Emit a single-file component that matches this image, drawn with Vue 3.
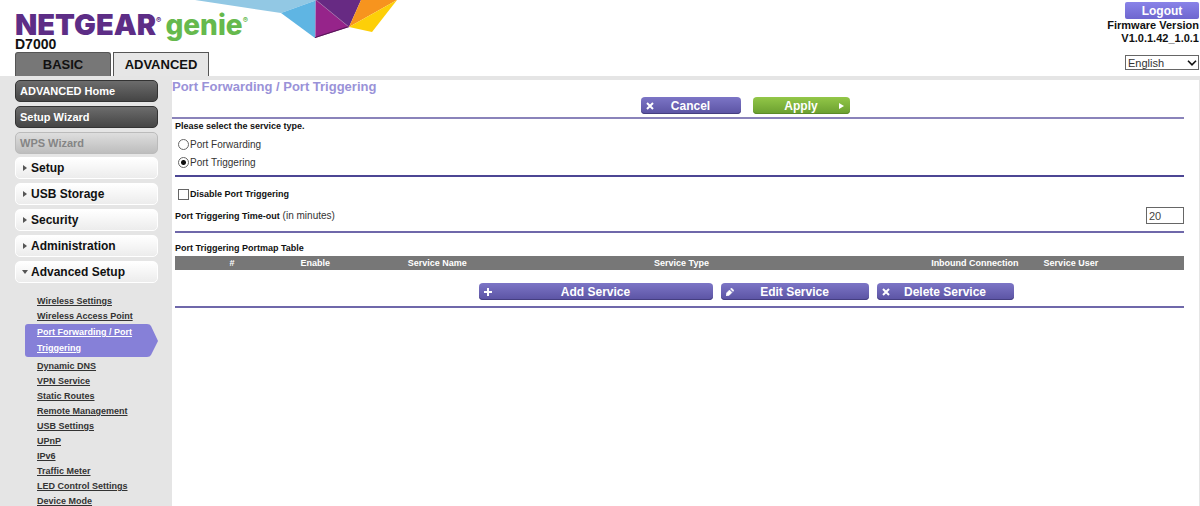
<script setup>
import { ref } from 'vue'

const menu = [
  { label: 'Setup' },
  { label: 'USB Storage' },
  { label: 'Security' },
  { label: 'Administration' },
  { label: 'Advanced Setup', open: true },
]

const links = [
  { label: 'Wireless Settings' },
  { label: 'Wireless Access Point' },
  { label: 'Port Forwarding / Port Triggering', current: true },
  { label: 'Dynamic DNS' },
  { label: 'VPN Service' },
  { label: 'Static Routes' },
  { label: 'Remote Management' },
  { label: 'USB Settings' },
  { label: 'UPnP' },
  { label: 'IPv6' },
  { label: 'Traffic Meter' },
  { label: 'LED Control Settings' },
  { label: 'Device Mode' },
]

const language = ref('English')
const service = ref('triggering')
const disabled = ref(false)
const timeout = ref('20')
</script>

<template>
  <div class="page">
    <header class="header">
      <svg class="crystals" width="210" height="40" viewBox="190 0 210 40" aria-hidden="true">
        <polygon points="195,0 317,0 281,13" fill="#92c8e4" />
        <polygon points="317,0 281,13 315,38" fill="#5fb5e3" />
        <polygon points="316,0 315,38 349,27" fill="#96248a" />
        <polygon points="316,0 361,0 349,27" fill="#672a83" />
        <polygon points="361,0 397,0 349,27" fill="#f7941e" />
        <polygon points="397,0 372,32 349,27" fill="#fdcf08" />
        <path d="M315 37.500L349 26.500" stroke="#561658" stroke-width="1.200" />
        <path d="M316 0L349 27" stroke="#a779ac" stroke-width=".6" />
        <path d="M315.500 0V37" stroke="#b286c4" stroke-width=".7" />
      </svg>
      <div class="left">
        <div class="brand">
          <span class="netgear">NETGEAR<sup>®</sup></span>
          <span class="genie">genie<sup>®</sup></span>
        </div>
        <div class="model">D7000</div>
        <nav class="tabs">
          <button type="button" class="tab basic">BASIC</button>
          <button type="button" class="tab advanced">ADVANCED</button>
        </nav>
      </div>
      <div class="right">
        <button type="button" class="logout">Logout</button>
        <div class="firmware">Firmware Version<br />V1.0.1.42_1.0.1</div>
        <div class="language">
          <select v-model="language" aria-label="Language">
            <option>English</option>
          </select>
          <svg width="10" height="6" viewBox="0 0 10 6" aria-hidden="true">
            <path d="M1 .8L5 4.800L9 .8" fill="none" stroke="#111" stroke-width="1.600" />
          </svg>
        </div>
      </div>
    </header>

    <div class="body">
      <aside class="sidebar">
        <div class="group wizards">
          <button type="button" class="item dark">ADVANCED Home</button>
          <button type="button" class="item dark">Setup Wizard</button>
          <button type="button" class="item off" disabled>WPS Wizard</button>
        </div>
        <div class="group">
          <button v-for="m in menu" :key="m.label" type="button" class="item light" :aria-expanded="!!m.open">
            <svg width="6" height="6" viewBox="0 0 6 6" aria-hidden="true">
              <path :d="m.open ? 'M0 1H6L3 5z' : 'M1 0V6L5 3z'" fill="#555" />
            </svg>
            {{ m.label }}
          </button>
        </div>
        <ul class="links">
          <li v-for="l in links" :key="l.label" :class="{ current: l.current }">
            <svg v-if="l.current" class="flag" viewBox="0 0 133 33" preserveAspectRatio="none" aria-hidden="true">
              <path d="M3 0H122Q125 0 126 2L133 17L126 31Q125 33 122 33H3Q0 33 0 30V3Q0 0 3 0z" fill="#8680d8" />
            </svg>
            <a href="#">{{ l.label }}</a>
          </li>
        </ul>
      </aside>

      <main class="main">
        <h1>Port Forwarding / Port Triggering</h1>
        <div class="actions top">
          <button type="button" class="btn cancel">
            <svg width="8" height="8" viewBox="0 0 8 8" aria-hidden="true"><path d="M1 1L7 7M7 1L1 7" stroke="#fff" stroke-width="2" /></svg>
            <span>Cancel</span>
          </button>
          <button type="button" class="btn apply">
            <span>Apply</span>
            <svg width="6" height="6" viewBox="0 0 6 6" aria-hidden="true"><path d="M1 0V6L6 3z" fill="#fff" /></svg>
          </button>
        </div>

        <div class="content">
          <fieldset class="section service">
            <legend>Please select the service type.</legend>
            <label><input v-model="service" type="radio" name="service" value="forwarding" />Port Forwarding</label>
            <label><input v-model="service" type="radio" name="service" value="triggering" />Port Triggering</label>
          </fieldset>

          <section class="section options">
            <label class="strong"><input v-model="disabled" type="checkbox" />Disable Port Triggering</label>
            <div class="timeout">
              <label for="timeout"><b>Port Triggering Time-out</b> (in minutes)</label>
              <input id="timeout" v-model="timeout" type="text" />
            </div>
          </section>

          <section class="section last">
            <table>
              <caption>Port Triggering Portmap Table</caption>
              <thead>
                <tr>
                  <th class="num">#</th>
                  <th class="enable">Enable</th>
                  <th class="name">Service Name</th>
                  <th class="type">Service Type</th>
                  <th class="inbound">Inbound Connection</th>
                  <th class="user">Service User</th>
                </tr>
              </thead>
            </table>
            <div class="actions">
              <button type="button" class="btn add">
                <svg width="8" height="8" viewBox="0 0 8 8" aria-hidden="true"><path d="M4 0V8M0 4H8" stroke="#fff" stroke-width="2" /></svg>
                <span>Add Service</span>
              </button>
              <button type="button" class="btn edit">
                <svg width="8" height="8" viewBox="0 0 8 8" aria-hidden="true"><path d="M0 8L.5 5L3.500 2L6 4.500L3 7.500zM4.500 1L5.500 0L8 2.500L7 3.500z" fill="#fff" stroke="#fff" stroke-width=".5" /></svg>
                <span>Edit Service</span>
              </button>
              <button type="button" class="btn delete">
                <svg width="8" height="8" viewBox="0 0 8 8" aria-hidden="true"><path d="M1 1L7 7M7 1L1 7" stroke="#fff" stroke-width="2" /></svg>
                <span>Delete Service</span>
              </button>
            </div>
          </section>
        </div>
      </main>
    </div>
  </div>
</template>

<style>
html {
  scrollbar-width: none;
}
body {
  margin: 0;
  background: #fff;
}
</style>

<style scoped>
.page {
  display: flex;
  flex-direction: column;
  min-height: 100vh;
  font-family: "Liberation Sans", Arial, sans-serif;
  font-size: 10px;
  color: #111;
}
.page *,
.page {
  box-sizing: border-box;
}
button,
input,
select {
  margin: 0;
  font-family: inherit;
}
.header {
  position: relative;
  display: flex;
  justify-content: space-between;
  height: 76px;
}
.crystals {
  position: absolute;
  left: 190px;
  top: 0;
}
.left {
  display: flex;
  flex-direction: column;
  padding: 10px 0 0 15px;
}
.brand {
  display: flex;
  gap: 4px;
  height: 28px;
  font-family: Inter, sans-serif;
  font-size: 29px;
  font-weight: 900;
  line-height: 30px;
}
.brand sup {
  font-size: 8px;
  line-height: 8px;
  vertical-align: 12px;
}
.netgear {
  color: #5d2d86;
}
.genie {
  color: #66b94d;
  font-size: 28px;
  font-weight: 800;
}
.model {
  height: 14px;
  font-size: 14px;
  font-weight: bold;
  line-height: 12px;
}
.tabs {
  display: flex;
  gap: 2px;
}
.tab {
  width: 96px;
  height: 24px;
  padding: 0;
  border: 1px solid #555;
  border-bottom: 0;
  font-size: 13px;
  font-weight: bold;
  color: #111;
}
.basic {
  border-radius: 3px 3px 0 0;
  background: #777;
}
.advanced {
  background: #e6e6e6;
}
.right {
  display: flex;
  flex-direction: column;
  align-items: flex-end;
  padding: 2px 1px 0 0;
}
.logout {
  width: 74px;
  height: 17px;
  padding: 0;
  border: 0;
  border-radius: 2px;
  background: linear-gradient(#8983e8, #6e66cf);
  color: #fff;
  font-size: 12px;
  font-weight: bold;
}
.firmware {
  font-size: 11px;
  font-weight: bold;
  line-height: 13px;
  text-align: right;
}
.language {
  position: relative;
  margin-top: 10px;
}
.language select {
  display: block;
  width: 74px;
  height: 15px;
  padding: 0 2px;
  border: 1px solid #666;
  border-radius: 0;
  appearance: none;
  background: #fff;
  color: #333;
  font-size: 11px;
}
.language svg {
  position: absolute;
  right: 2px;
  top: 5px;
  pointer-events: none;
}
.body {
  display: flex;
  flex: 1;
  border-top: 4px solid #e5e5e5;
}
.sidebar {
  flex: none;
  width: 172px;
  background: #e5e5e5;
}
.group {
  display: flex;
  flex-direction: column;
  gap: 4px;
  margin: 0 14px 0 15px;
}
.wizards {
  margin-bottom: 3px;
}
.item {
  display: flex;
  align-items: center;
  gap: 3px;
  height: 22px;
  padding: 0 4px;
  border: 1px solid #333;
  border-radius: 5px;
  font-size: 12px;
  font-weight: bold;
  text-align: left;
}
.dark {
  background: linear-gradient(#6c6c6c, #454545);
  color: #fff;
  font-size: 11px;
}
.off {
  border-color: #bbb;
  background: linear-gradient(#dedede, #bdbdbd);
  color: #858585;
  font-size: 11px;
}
.light {
  padding: 0 6px;
  border-color: #fff;
  background: linear-gradient(#fff, #ececec);
  color: #111;
}
.links {
  margin: 0;
  padding: 11px 0 0;
  list-style: none;
  font-size: 9px;
  font-weight: bold;
  line-height: 15px;
}
.links li {
  padding: 0 30px 0 37px;
}
.links a {
  color: #333;
  text-underline-offset: 1px;
}
.links .current {
  position: relative;
  margin: 0 0 3px;
  line-height: 16px;
}
.links .current a {
  position: relative;
  color: #fff;
}
.flag {
  position: absolute;
  left: 25px;
  top: 0;
  width: 133px;
  height: 33px;
}
.main {
  flex: 1;
  min-width: 0;
  padding-right: 15px;
  border-right: 1px solid #e5e5e5;
}
h1 {
  margin: 0;
  color: #9a92d8;
  font-size: 13px;
  line-height: 14px;
}
.actions {
  display: flex;
  justify-content: center;
  gap: 8px;
  padding-left: 133px;
}
.top {
  gap: 12px;
  padding: 3px 0 3px 134px;
  border-bottom: 2px solid #8a83ba;
}
.btn {
  position: relative;
  height: 17px;
  padding: 0;
  border: 0;
  border-radius: 4px;
  background: linear-gradient(#7c75c6, #5b53a3);
  box-shadow: inset 0 -1px #453e80;
  color: #fff;
  font-size: 12px;
  font-weight: bold;
  line-height: 16px;
}
.btn svg {
  position: absolute;
  left: 5px;
  top: 5px;
}
.cancel {
  width: 100px;
}
.apply {
  width: 97px;
  background: linear-gradient(#93c748, #6a9f2f);
  box-shadow: inset 0 -1px #5c8b28;
}
.btn.apply svg {
  left: auto;
  right: 6px;
  top: 6px;
}
.add {
  width: 234px;
}
.edit {
  width: 148px;
}
.delete {
  width: 137px;
}
.content {
  padding-left: 3px;
}
.section {
  margin: 0;
  border: 0;
  border-bottom: 2px solid #6f68aa;
}
.service {
  display: flex;
  flex-direction: column;
  padding: 0 0 4px;
  border-color: #4c4694;
}
legend {
  padding: 0 0 1px;
  font-size: 9px;
  font-weight: bold;
  line-height: 15px;
}
.service label,
.strong {
  display: flex;
  align-items: center;
  gap: 1px;
  height: 18px;
  padding-left: 3px;
  color: #333;
}
.strong {
  color: #111;
  font-size: 9px;
  font-weight: bold;
}
input[type="radio"],
input[type="checkbox"] {
  width: 11px;
  height: 11px;
  border: 1px solid #666;
  appearance: none;
  background: #fff;
}
input[type="radio"] {
  border-radius: 50%;
}
input[type="radio"]:checked {
  background: radial-gradient(circle, #111 0 2px, #fff 3px);
}
input[type="checkbox"]:checked {
  background: #555;
}
.options {
  padding: 8px 0 7px;
}
.timeout {
  display: flex;
  align-items: center;
  justify-content: space-between;
  margin-top: 4px;
  color: #333;
}
.timeout b {
  color: #111;
  font-size: 9px;
}
.timeout input {
  width: 38px;
  height: 17px;
  padding: 0 2px;
  border: 1px solid #666;
  color: #444;
  font-size: 11px;
}
.last {
  padding: 8px 0 6px;
}
table {
  width: 100%;
  margin-bottom: 13px;
  border-collapse: collapse;
  table-layout: fixed;
  font-size: 9px;
}
caption {
  padding-bottom: 1px;
  font-weight: bold;
  line-height: 14px;
  text-align: left;
}
th {
  height: 14px;
  padding: 0;
  background: #777;
  color: #fff;
  line-height: 14px;
  white-space: nowrap;
}
.num {
  width: 11.3%;
}
.enable {
  width: 5.2%;
}
.name {
  width: 19%;
}
.type {
  width: 29.4%;
}
.inbound {
  width: 20%;
  padding-right: 13px;
  text-align: right;
}
.user {
  padding-left: 12px;
  text-align: left;
}
</style>
